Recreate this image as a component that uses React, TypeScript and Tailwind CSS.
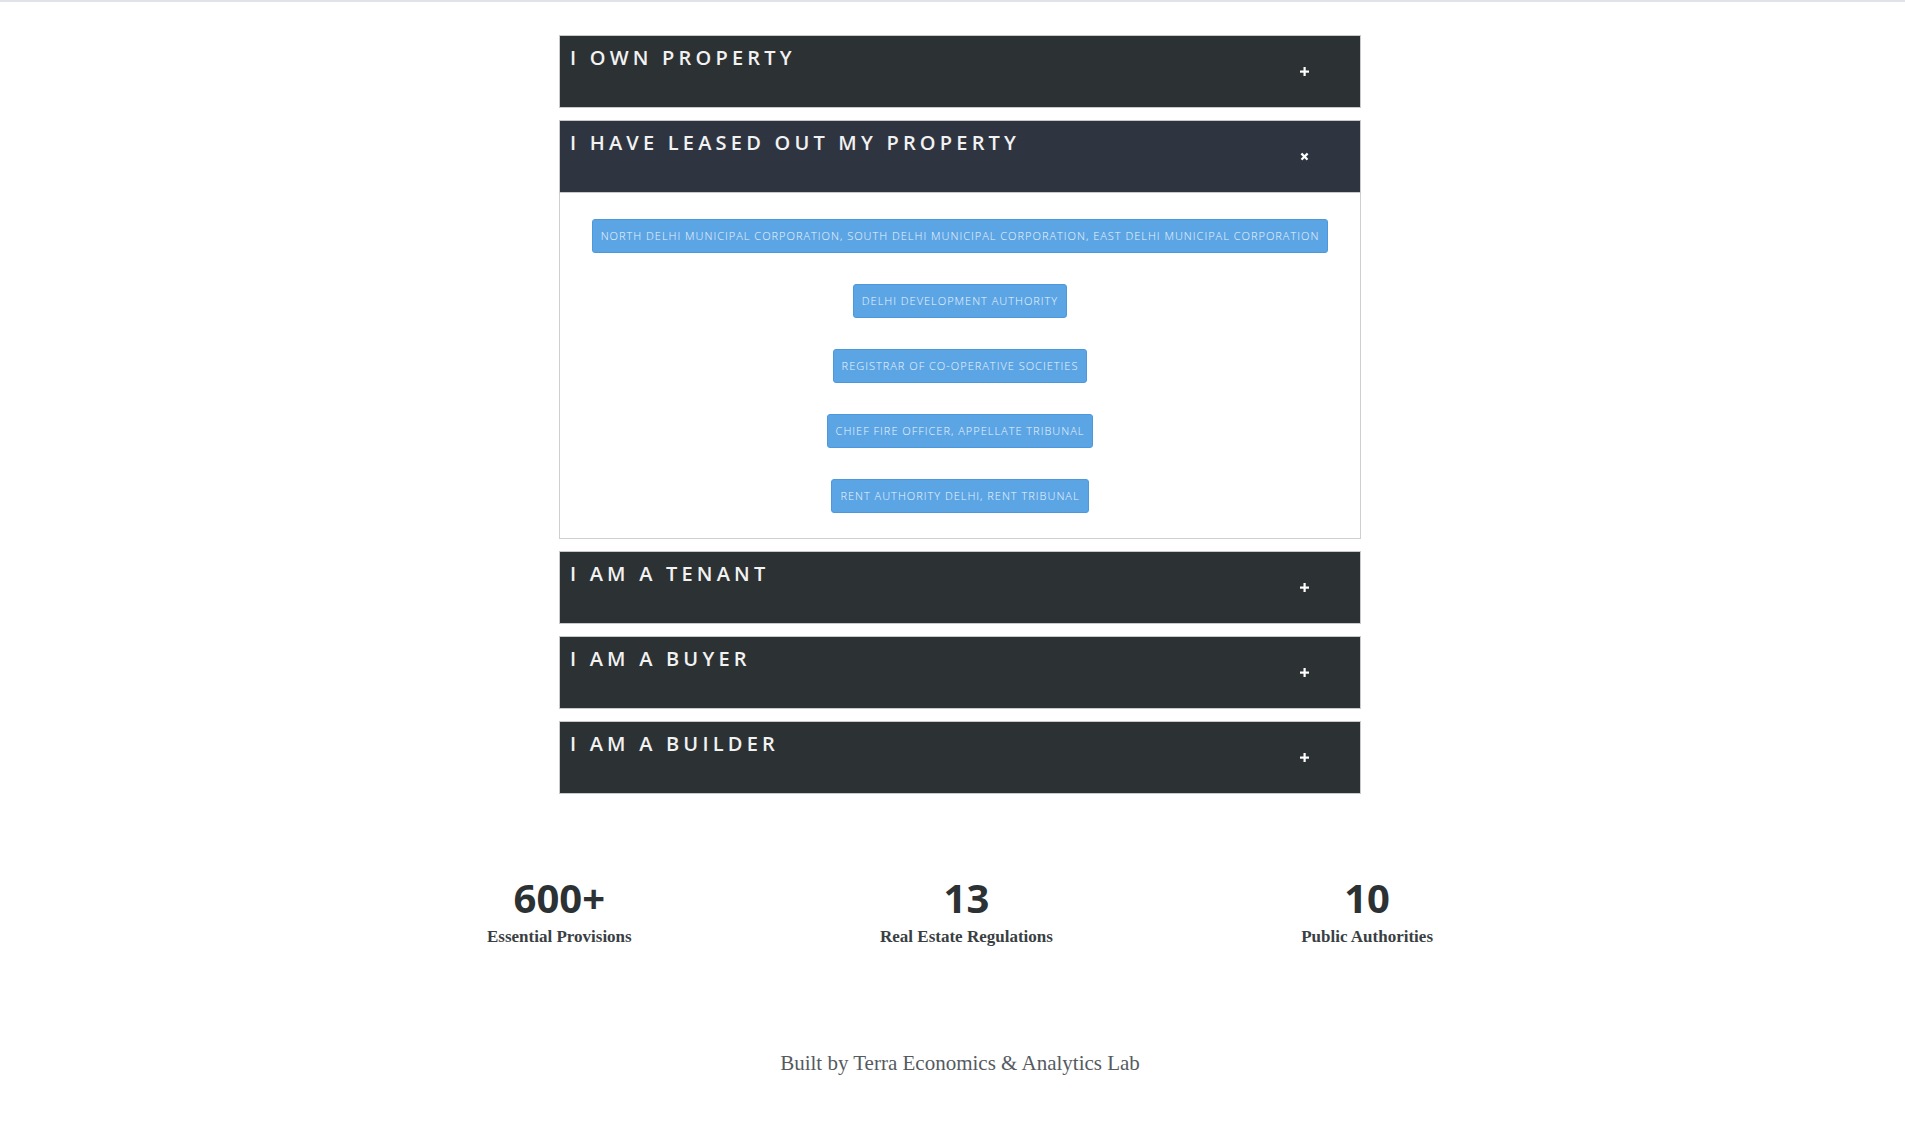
import { useState } from "react";

const sections = [
  { title: "I OWN PROPERTY", links: [] as string[] },
  {
    title: "I HAVE LEASED OUT MY PROPERTY",
    links: [
      "NORTH DELHI MUNICIPAL CORPORATION, SOUTH DELHI MUNICIPAL CORPORATION, EAST DELHI MUNICIPAL CORPORATION",
      "DELHI DEVELOPMENT AUTHORITY",
      "REGISTRAR OF CO-OPERATIVE SOCIETIES",
      "CHIEF FIRE OFFICER, APPELLATE TRIBUNAL",
      "RENT AUTHORITY DELHI, RENT TRIBUNAL",
    ],
  },
  { title: "I AM A TENANT", links: [] as string[] },
  { title: "I AM A BUYER", links: [] as string[] },
  { title: "I AM A BUILDER", links: [] as string[] },
];

const stats = [
  { value: "600+", label: "Essential Provisions" },
  { value: "13", label: "Real Estate Regulations" },
  { value: "10", label: "Public Authorities" },
];

function PlusIcon({ open }: { open: boolean }) {
  return (
    <svg
      width="9"
      height="9"
      viewBox="0 0 9 9"
      className={open ? "rotate-45" : ""}
      fill="#ffffff"
    >
      <rect x="3.5" y="0" width="2.2" height="9" />
      <rect x="0" y="3.5" width="9" height="2.2" />
    </svg>
  );
}

export default function App() {
  const [open, setOpen] = useState(1);

  return (
    <div className="min-h-screen bg-white">
      <div className="h-[2px] bg-[#dfe2e6]" />

      <div className="pl-[15px]">
        <div className="mx-auto mt-[33px] w-[802px]">
          {sections.map((s, i) => {
            const isOpen = open === i;
            return (
              <div key={s.title} className="mb-[12px]">
                <button
                  type="button"
                  onClick={() => setOpen(isOpen ? -1 : i)}
                  className={`flex h-[73px] w-full justify-between border border-[#c9c9c9] pl-[10px] pr-[51px] text-left ${
                    isOpen ? "bg-[#2f3540]" : "bg-[#2c3134]"
                  }`}
                >
                  <span
                    className="mt-[8px] self-start text-[20px] font-semibold leading-[28px] tracking-[4.2px] text-[#f2f2f2]"
                    style={{ fontFamily: '"Open Sans", sans-serif' }}
                  >
                    {s.title}
                  </span>
                  <span className="self-center">
                    <PlusIcon open={isOpen} />
                  </span>
                </button>

                {isOpen && s.links.length > 0 && (
                  <div className="flex flex-col items-center gap-[31px] border-x border-b border-[#cfcfcf] pb-[25px] pt-[26px]">
                    {s.links.map((l) => (
                      <a
                        key={l}
                        href="#"
                        className="flex h-[34px] items-center rounded-[3px] border border-[#4d98dc] bg-[#5ca5e5] px-[8px] text-[11px] font-light tracking-[1px] text-[#eef5fd]"
                        style={{ fontFamily: '"Open Sans", sans-serif' }}
                      >
                        {l}
                      </a>
                    ))}
                  </div>
                )}
              </div>
            );
          })}
        </div>

        <div className="mx-auto mt-[82px] flex w-[946px] justify-between">
          {stats.map((s) => (
            <div key={s.label} className="flex flex-col items-center">
              <div
                className="text-[40px] font-bold leading-[44px] text-[#2c3134]"
                style={{ fontFamily: '"Open Sans", sans-serif' }}
              >
                {s.value}
              </div>
              <div
                className="mt-[7px] text-[17px] font-bold leading-[20px] text-[#3a3f44]"
                style={{ fontFamily: '"Liberation Serif", serif' }}
              >
                {s.label}
              </div>
            </div>
          ))}
        </div>

        <div
          className="mt-[102px] pb-[60px] text-center text-[21px] leading-[28px] text-[#555a5f]"
          style={{ fontFamily: '"Liberation Serif", serif' }}
        >
          Built by Terra Economics &amp; Analytics Lab
        </div>
      </div>
    </div>
  );
}
